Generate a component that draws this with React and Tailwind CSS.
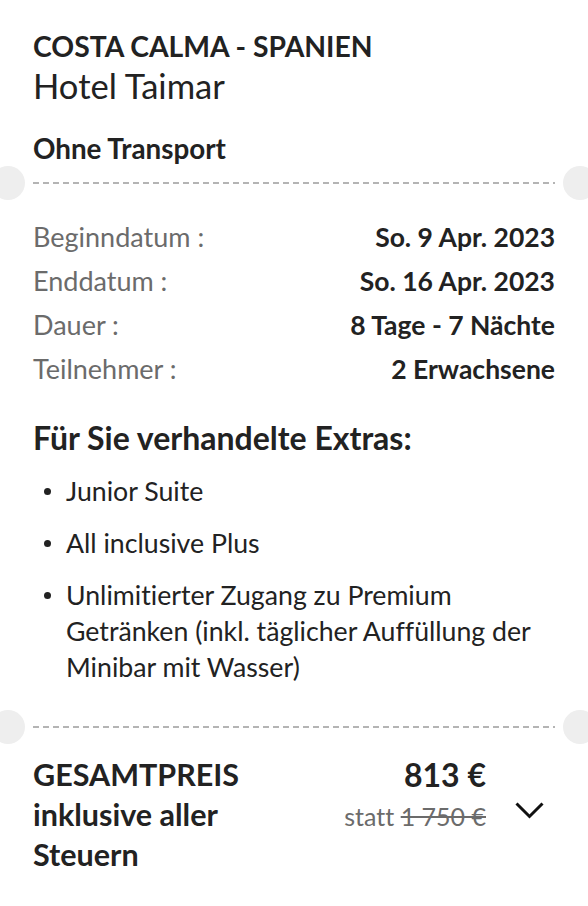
export default function App() {
  const rows = [
    ["Beginndatum :", "So. 9 Apr. 2023"],
    ["Enddatum :", "So. 16 Apr. 2023"],
    ["Dauer :", "8 Tage - 7 Nächte"],
    ["Teilnehmer :", "2 Erwachsene"],
  ];
  const Divider = () => (
    <div className="relative h-[2px] mx-[33px]">
      <div className="h-[2px] bg-[linear-gradient(to_right,#b4b4b4_6px,transparent_6px)] bg-[length:10px_2px] bg-repeat-x" />
      <div className="absolute left-[-42px] top-[-16px] w-[34px] h-[34px] rounded-full bg-[#eeeeee]" />
      <div className="absolute right-[-42px] top-[-16px] w-[34px] h-[34px] rounded-full bg-[#eeeeee]" />
    </div>
  );
  const Dot = () => (
    <span className="w-[33px] shrink-0 self-start flex justify-center pt-[15px] pr-[4px]">
      <span className="w-[7px] h-[7px] rounded-full bg-[#222222]" />
    </span>
  );
  return (
    <div className="relative w-[588px] min-h-[906px] overflow-hidden bg-white text-[#222222] font-['Lato',sans-serif] [font-variant-ligatures:none]">
      <div className="px-[33px] pt-[31px]">
        <h1 className="text-[28.3px] font-bold leading-[30px]">COSTA CALMA - SPANIEN</h1>
        <p className="mt-[5px] text-[34.6px] font-normal leading-[40px]">Hotel Taimar</p>
        <p className="mt-[28px] text-[27.8px] font-bold leading-[30px]">Ohne Transport</p>
      </div>
      <div className="mt-[18px]">
        <Divider />
      </div>
      <div className="px-[33px] pt-[31px]">
        {rows.map(([k, v]) => (
          <div key={k} className="flex justify-between items-center h-[44px] leading-[44px]">
            <span className="text-[27px] text-[#6b6b6b]">{k}</span>
            <span className="text-[26.5px] font-bold">{v}</span>
          </div>
        ))}
        <h2 className="mt-[29px] text-[32px] font-bold leading-[36px]">Für Sie verhandelte Extras:</h2>
        <ul className="mt-[17px] flex flex-col gap-[16px] text-[26.7px] leading-[36px]">
          <li className="flex">
            <Dot />
            <span>Junior Suite</span>
          </li>
          <li className="flex">
            <Dot />
            <span>All inclusive Plus</span>
          </li>
          <li className="flex">
            <Dot />
            <span className="whitespace-nowrap">
              Unlimitierter Zugang zu Premium
              <br />
              Getränken (inkl. täglicher Auffüllung der
              <br />
              Minibar mit Wasser)
            </span>
          </li>
        </ul>
      </div>
      <div className="mt-[41px]">
        <Divider />
      </div>
      <div className="px-[33px] pt-[26px] flex justify-between">
        <div className="text-[30.5px] font-bold leading-[40px]">
          GESAMTPREIS
          <br />
          inklusive aller
          <br />
          Steuern
        </div>
        <div className="flex items-start">
          <div className="flex flex-col items-end pt-[1px]">
            <span className="text-[32px] font-bold leading-[40px]">813 €</span>
            <span className="text-[25px] text-[#6b6b6b] leading-[42px]">
              statt <span className="line-through">1 750 €</span>
            </span>
          </div>
          <div className="ml-[29px] mr-[11px] mt-[48px]">
            <svg width="29" height="17" viewBox="0 0 29 17" fill="none">
              <path d="M1.5 1.5 L14.5 14.5 L27.5 1.5" stroke="#111" strokeWidth="3" />
            </svg>
          </div>
        </div>
      </div>
    </div>
  );
}
